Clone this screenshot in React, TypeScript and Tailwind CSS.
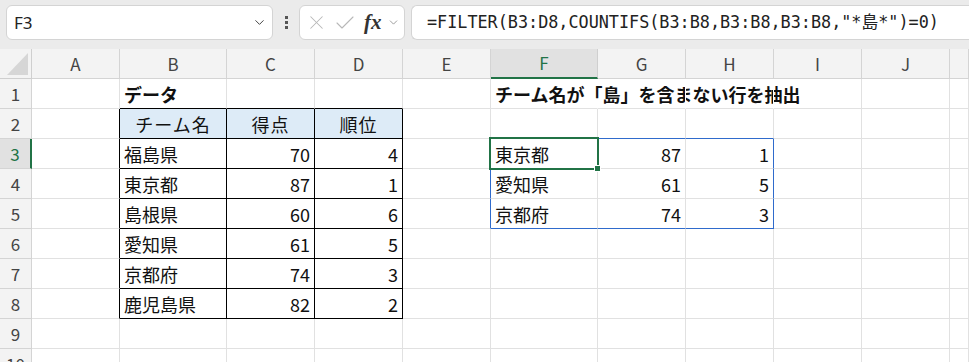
import { ChevronDown, X, Check } from 'lucide-react';

const COLS = ['A', 'B', 'C', 'D', 'E', 'F', 'G', 'H', 'I', 'J', ''];

type CellVal = { t: string; num?: boolean; bold?: boolean; center?: boolean; head?: boolean };

// sheet content, keyed by "col,row"
const data: Record<string, CellVal> = {
  '1,1': { t: 'データ', bold: true },
  '5,1': { t: 'チーム名が「島」を含まない行を抽出', bold: true },
  '1,2': { t: 'チーム名', center: true, head: true },
  '2,2': { t: '得点', center: true, head: true },
  '3,2': { t: '順位', center: true, head: true },
};

const rows = [
  ['福島県', '70', '4'],
  ['東京都', '87', '1'],
  ['島根県', '60', '6'],
  ['愛知県', '61', '5'],
  ['京都府', '74', '3'],
  ['鹿児島県', '82', '2'],
];
rows.forEach((r, i) => {
  data[`1,${i + 3}`] = { t: r[0] };
  data[`2,${i + 3}`] = { t: r[1], num: true };
  data[`3,${i + 3}`] = { t: r[2], num: true };
});

const result = [
  ['東京都', '87', '1'],
  ['愛知県', '61', '5'],
  ['京都府', '74', '3'],
];
result.forEach((r, i) => {
  data[`5,${i + 3}`] = { t: r[0] };
  data[`6,${i + 3}`] = { t: r[1], num: true };
  data[`7,${i + 3}`] = { t: r[2], num: true };
});

function rightBorder(c: number, r: number) {
  if (r >= 2 && r <= 8 && c <= 3) return 'border-r-black';
  if (r >= 3 && r <= 5 && (c === 4 || c === 7)) return 'border-r-[#2f6bcc]';
  // title in F1 spills over G1 and H1, hiding the gridlines
  if (r === 1 && c >= 5 && c <= 7) return 'border-r-white';
  return 'border-r-[#e1e1e1]';
}

function bottomBorder(c: number, r: number) {
  if (c >= 1 && c <= 3 && r >= 1 && r <= 8) return 'border-b-black';
  if (c >= 5 && c <= 7 && (r === 2 || r === 5)) return 'border-b-[#2f6bcc]';
  return 'border-b-[#e1e1e1]';
}

function Cell({ c, r }: { c: number; r: number }) {
  const v = data[`${c},${r}`];
  const bg = v?.head ? 'bg-[#ddebf7]' : '';
  const align = v?.num ? 'justify-end pr-[4px]' : v?.center ? 'justify-center' : 'justify-start pl-[4px]';
  return (
    <div
      className={`h-[30px] border-r border-b ${rightBorder(c, r)} ${bottomBorder(c, r)} ${bg} flex items-center ${align} whitespace-nowrap overflow-visible`}
    >
      {v && (
        <span className={`text-[18px] leading-none text-[#111] ${v.bold ? 'font-bold' : 'font-normal'} ${v.center ? 'tracking-[1px]' : ''}`}>
          {v.t}
        </span>
      )}
    </div>
  );
}

export default function App() {
  const rowNums = [1, 2, 3, 4, 5, 6, 7, 8, 9, 10];
  return (
    <div
      className="relative w-[969px] h-[362px] overflow-hidden bg-white"
      style={{ fontFamily: '"Noto Sans CJK JP", "Noto Sans", sans-serif' }}
    >
      {/* Formula bar */}
      <div className="h-[49px] bg-[#ebebeb] flex items-start pt-[5px] pl-[6px] gap-[6px]">
        <div className="w-[267px] h-[35px] bg-white rounded-[6px] border border-[#d4d4d4] flex items-center pl-[7px] pr-[5px]">
          <span className="flex-1 text-[17px] text-[#222]" style={{ fontFamily: '"Noto Sans", sans-serif' }}>F3</span>
          <ChevronDown className="w-[15px] h-[15px] text-[#444]" strokeWidth={1.6} />
        </div>
        <div className="w-[14px] h-[35px] flex flex-col items-center justify-center gap-[2px]">
          <span className="w-[3px] h-[3px] bg-[#555]" />
          <span className="w-[3px] h-[3px] bg-[#555]" />
          <span className="w-[3px] h-[3px] bg-[#555]" />
        </div>
        <div className="w-[106px] h-[35px] bg-white rounded-[6px] border border-[#d4d4d4] flex items-center pl-[5px] gap-[5px]">
          <X className="w-[23px] h-[23px] text-[#b8b8b8]" strokeWidth={1.1} />
          <Check className="w-[24px] h-[24px] text-[#b8b8b8]" strokeWidth={1.1} />
          <span className="text-[21px] italic font-bold text-[#333] leading-none ml-[2px]" style={{ fontFamily: '"Liberation Serif", serif' }}>fx</span>
          <ChevronDown className="w-[13px] h-[13px] text-[#888]" strokeWidth={1.5} />
        </div>
        <div className="flex-1 h-[35px] bg-white rounded-l-[6px] border border-r-0 border-[#d4d4d4] flex items-center pl-[15px]">
          <span className="text-[16.8px] text-[#222] whitespace-nowrap" style={{ fontFamily: '"DejaVu Sans Mono", "Noto Sans CJK JP", monospace' }}>
            =FILTER(B3:D8,COUNTIFS(B3:B8,B3:B8,B3:B8,"*島*")=0)
          </span>
        </div>
      </div>

      {/* Grid */}
      <div className="grid grid-cols-[32px_88px_107px_88px_88px_88px_107px_88px_88px_88px_88px_1fr]">
        {/* Header row */}
        <div className="h-[30px] bg-[#f3f3f3] border-r border-b border-[#cfcfcf] relative">
          <svg className="absolute left-[7px] top-[4px]" width="21" height="22" viewBox="0 0 21 22">
            <polygon points="21,0 21,22 0,22" fill="#d6d6d6" />
          </svg>
        </div>
        {COLS.map((c, i) =>
          i === 5 ? (
            <div key={c + i} className="h-[30px] bg-[#e1e1e1] border-r border-[#cfcfcf] border-b-[2px] border-b-[#217346] flex items-center justify-center">
              <span className="text-[17px] text-[#217346]">{c}</span>
            </div>
          ) : (
            <div key={c + i} className="h-[30px] bg-[#f3f3f3] border-r border-b border-[#d4d4d4] flex items-center justify-center">
              <span className="text-[17px] text-[#444]">{c}</span>
            </div>
          )
        )}

        {rowNums.map((r) => (
          <div key={r} className="contents">
            {r === 3 ? (
              <div className="h-[30px] bg-[#e1e1e1] border-b border-[#d4d4d4] border-r-[2px] border-r-[#217346] flex items-center justify-center">
                <span className="text-[17px] text-[#217346]">{r}</span>
              </div>
            ) : (
              <div className="h-[30px] bg-[#f3f3f3] border-r border-b border-[#d4d4d4] flex items-center justify-center">
                <span className="text-[17px] text-[#444]">{r}</span>
              </div>
            )}
            {COLS.map((_, c) => (
              <Cell key={c} c={c} r={r} />
            ))}
          </div>
        ))}
      </div>

      {/* Active cell F3 */}
      <div className="absolute left-[489px] top-[137px] w-[110px] h-[33px] border-[2px] border-[#217346] pointer-events-none" />
      <div className="absolute left-[594px] top-[165px] w-[7px] h-[7px] bg-[#217346] border border-white pointer-events-none" />
    </div>
  );
}
